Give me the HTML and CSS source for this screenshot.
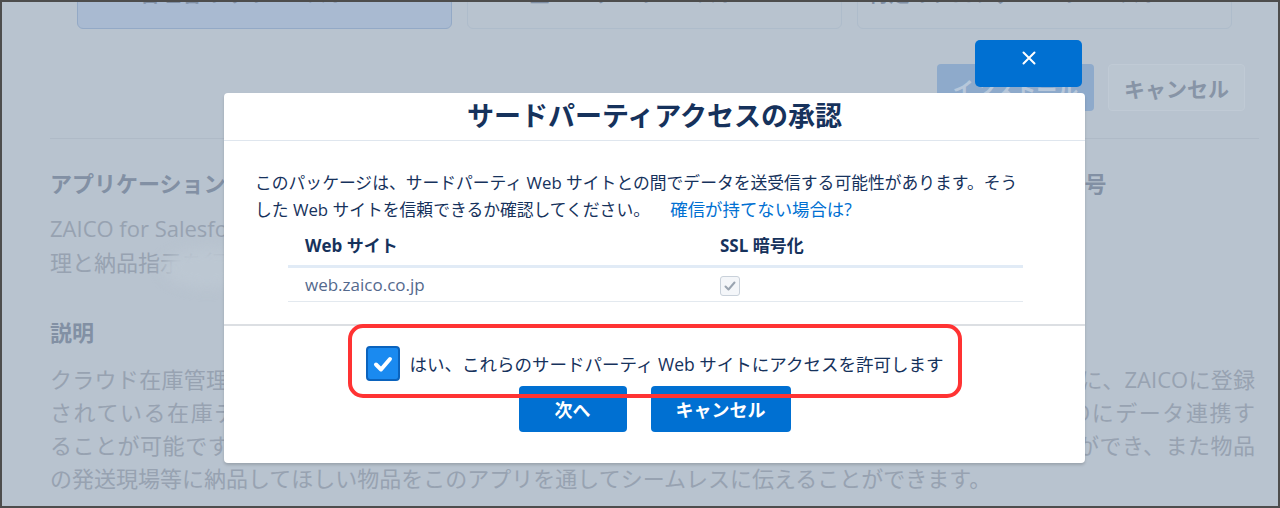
FILE: index.html
```html
<!DOCTYPE html>
<html lang="ja">

<head>
    <meta charset="UTF-8">
    <meta name="viewport" content="width=device-width, initial-scale=1.0">
    <title>サードパーティアクセスの承認</title>

    <link rel="stylesheet" href="styles.css">
</head>

<body>
    <div class="screen">
        <!-- page behind the dialog -->
        <div class="tabs">
            <div class="tab tab-active">管理者のみのインストール</div>
            <div class="tab">全ユーザーのインストール</div>
            <div class="tab">特定のプロファイルのインストール...</div>
        </div>

        <div class="actions">
            <div class="btn-install">インストール</div>
            <div class="btn-cancel">キャンセル</div>
        </div>

        <div class="divider"></div>

        <div class="info">
            <div class="info-col">
                <h3 class="info-title">アプリケーション名</h3>
                <p class="info-text">ZAICO for Salesforce は Salesforce 上での在庫管<br>理と納品指示を行うアプリです</p>
            </div>
            <div class="info-col">
                <h3 class="info-title">バージョン番号</h3>
            </div>
        </div>

        <h3 class="info-title desc-title">説明</h3>
        <div class="desc">
            <div class="desc-line">クラウド在庫管理ソフトZAICOとSalesforceを連携させるアプリです。Salesforce上の商談や取引先ごとに、ZAICOに登録</div>
            <div class="desc-line">されている在庫データを商談画面から参照したり、Salesforceで新たに登録した商品データをZAICOにデータ連携す</div>
            <div class="desc-line">ることが可能です。また、Salesforceの商談画面上から直接、在庫の引当や出荷作業の指示を行うことができ、また物品</div>
            <div class="desc-last">の発送現場等に納品してほしい物品をこのアプリを通してシームレスに伝えることができます。</div>
        </div>

        <div class="smudge"></div>

        <!-- dialog -->
        <div class="modal">
            <div class="modal-header">
                <h2>サードパーティアクセスの承認</h2>
            </div>

            <div class="modal-body">
                <p class="notice">このパッケージは、サードパーティ Web サイトとの間でデータを送受信する可能性があります。そう<br>した Web サイトを信頼できるか確認してください。 <a href="#" class="link">確信が持てない場合は?</a></p>

                <table class="sites">
                    <thead>
                        <tr>
                            <th class="col-site">Web サイト</th>
                            <th>SSL 暗号化</th>
                        </tr>
                    </thead>
                    <tbody>
                        <tr>
                            <td class="col-site site-url">web.zaico.co.jp</td>
                            <td>
                                <span class="ssl-box">
                                    <svg width="14" height="14" viewBox="0 0 14 14"><polyline points="2.5,7.5 5.5,10.5 11.5,3.5" fill="none" stroke="#9aa4b0" stroke-width="2" stroke-linecap="round" stroke-linejoin="round"/></svg>
                                </span>
                            </td>
                        </tr>
                    </tbody>
                </table>
            </div>

            <div class="modal-footer">
                <label class="agree">
                    <span class="agree-box">
                        <svg width="24" height="24" viewBox="0 0 24 24"><polyline points="5,12.5 10,17.5 19,7" fill="none" stroke="#fff" stroke-width="4" stroke-linecap="round" stroke-linejoin="round"/></svg>
                    </span>
                    <span class="agree-text">はい、これらのサードパーティ Web サイトにアクセスを許可します</span>
                </label>
                <div class="footer-buttons">
                    <button class="button btn-next">次へ</button>
                    <button class="button btn-modal-cancel">キャンセル</button>
                </div>
            </div>

            <div class="highlight"></div>
        </div>

        <button class="close">
            <svg width="14" height="14" viewBox="0 0 14 14"><path d="M1.5 1.5 L12.5 12.5 M12.5 1.5 L1.5 12.5" stroke="#fff" stroke-width="2" stroke-linecap="round"/></svg>
        </button>
    </div>
</body>

</html>
```

FILE: styles.css
```css
body {
    margin: 0;
    font-family: "Open Sans", "Noto Sans CJK JP", sans-serif;
}

.screen {
    position: relative;
    width: 1280px;
    height: 508px;
    box-sizing: border-box;
    border: 2px solid #4d4d4d;
    background-color: #b8c3cf;
    overflow: hidden;
}

/* background page */
.tabs {
    display: flex;
    gap: 15px;
    padding-left: 75px;
    margin-top: -22px;
}

.tab {
    width: 375px;
    height: 49px;
    box-sizing: border-box;
    border: 1px solid #aebccb;
    border-radius: 6px;
    display: flex;
    align-items: flex-end;
    justify-content: center;
    padding-bottom: 24px;
    font-size: 21px;
    line-height: 21px;
    font-weight: bold;
    color: #7f8fa5;
}

.tab-active {
    background-color: #a9bad1;
    border-color: #93a9c6;
}

.actions {
    display: flex;
    justify-content: flex-end;
    gap: 14px;
    padding-right: 33px;
    margin-top: 35px;
}

.btn-install,
.btn-cancel {
    height: 47px;
    box-sizing: border-box;
    border-radius: 4px;
    display: flex;
    align-items: center;
    justify-content: center;
    font-size: 21px;
    font-weight: bold;
}

.btn-install {
    width: 157px;
    background-color: #8eaacb;
    color: #b7c7da;
}

.btn-cancel {
    width: 137px;
    border: 1px solid #c0cad5;
    background-color: #bbc6d1;
    color: #8794a6;
}

.divider {
    height: 1px;
    background-color: #afbac7;
    margin: 27px 19px 0 48px;
}

.info {
    display: grid;
    grid-template-columns: 903px 1fr;
    padding-left: 48px;
    margin-top: 29px;
}

.info-title {
    margin: 0;
    font-size: 22px;
    line-height: 30px;
    font-weight: bold;
    color: #8290a4;
}

.info-text {
    margin: 13px 0 0;
    font-size: 22px;
    line-height: 34px;
    color: #97a2b1;
}

.desc-title {
    margin: 38px 0 0 48px;
}

.desc {
    margin: 16px 0 0 48px;
    width: 1205px;
    font-size: 22px;
    line-height: 33px;
    color: #97a2b1;
    white-space: nowrap;
}

.desc-line {
    text-align: justify;
    text-align-last: justify;
    white-space: normal;
}

.smudge {
    position: absolute;
    left: 160px;
    top: 246px;
    width: 90px;
    height: 40px;
    border-radius: 50%;
    background-color: #bcc7d2;
    filter: blur(6px);
}

/* dialog */
.modal {
    position: absolute;
    left: 222px;
    top: 91px;
    width: 861px;
    height: 370px;
    background-color: #fff;
    border-radius: 4px;
    box-shadow: 0 2px 3px rgba(0, 0, 0, 0.16);
    color: #16325c;
}

.modal-header {
    height: 47px;
    border-bottom: 1px solid #dfe6ee;
    text-align: center;
}

.modal-header h2 {
    margin: 0;
    font-size: 27px;
    line-height: 46px;
    font-weight: bold;
}

.modal-body {
    padding: 28px 0 0 31px;
}

.notice {
    margin: 0;
    font-size: 16.8px;
    line-height: 27px;
}

.link {
    color: #0070d2;
    text-decoration: none;
    margin-left: 16px;
    font-size: 17.4px;
}

.sites {
    margin-left: 33px;
    width: 735px;
    border-collapse: collapse;
    font-size: 17px;
}

.sites th {
    text-align: left;
    font-weight: bold;
    padding: 4px 0 0 17px;
    height: 38px;
    line-height: 38px;
    border-bottom: 3px solid #e1ebf6;
}

.sites td {
    padding: 0 0 0 17px;
    height: 33px;
    line-height: 33px;
    border-bottom: 1px solid #e3e9ef;
}

.col-site {
    width: 398px;
}

.site-url {
    color: #54698d;
}

.ssl-box {
    display: inline-flex;
    align-items: center;
    justify-content: center;
    width: 20px;
    height: 20px;
    box-sizing: border-box;
    border: 1px solid #c9d1da;
    border-radius: 3px;
    background-color: #f4f6f9;
    vertical-align: middle;
}

.modal-footer {
    margin-top: 22px;
    border-top: 2px solid #dcdfe3;
    padding: 20px 0 30px;
    display: flex;
    flex-direction: column;
    align-items: center;
}

.agree {
    display: flex;
    align-items: center;
    height: 35px;
}

.agree-box {
    width: 34px;
    height: 35px;
    box-sizing: border-box;
    border: 2px solid #0b63bd;
    border-radius: 4px;
    background-color: #1a8af0;
    display: flex;
    align-items: center;
    justify-content: center;
}

.agree-text {
    margin-left: 10px;
    font-size: 17.5px;
}

.footer-buttons {
    display: flex;
    gap: 24px;
    margin-top: 5px;
}

.button {
    height: 46px;
    border: none;
    border-radius: 4px;
    background-color: #0070d2;
    color: #fff;
    font-family: inherit;
    font-size: 18px;
    font-weight: bold;
    padding: 0;
}

.btn-next {
    width: 108px;
}

.btn-modal-cancel {
    width: 140px;
}

.highlight {
    position: absolute;
    left: 124px;
    top: 231px;
    width: 614px;
    height: 74px;
    box-sizing: border-box;
    border: 4px solid #ff3333;
    border-radius: 15px;
}

.close {
    position: absolute;
    left: 973px;
    top: 38px;
    width: 107px;
    height: 47px;
    border: none;
    border-radius: 5px;
    background-color: #0070d2;
    padding: 11px 0 0;
    display: flex;
    justify-content: center;
    align-items: flex-start;
}
```
